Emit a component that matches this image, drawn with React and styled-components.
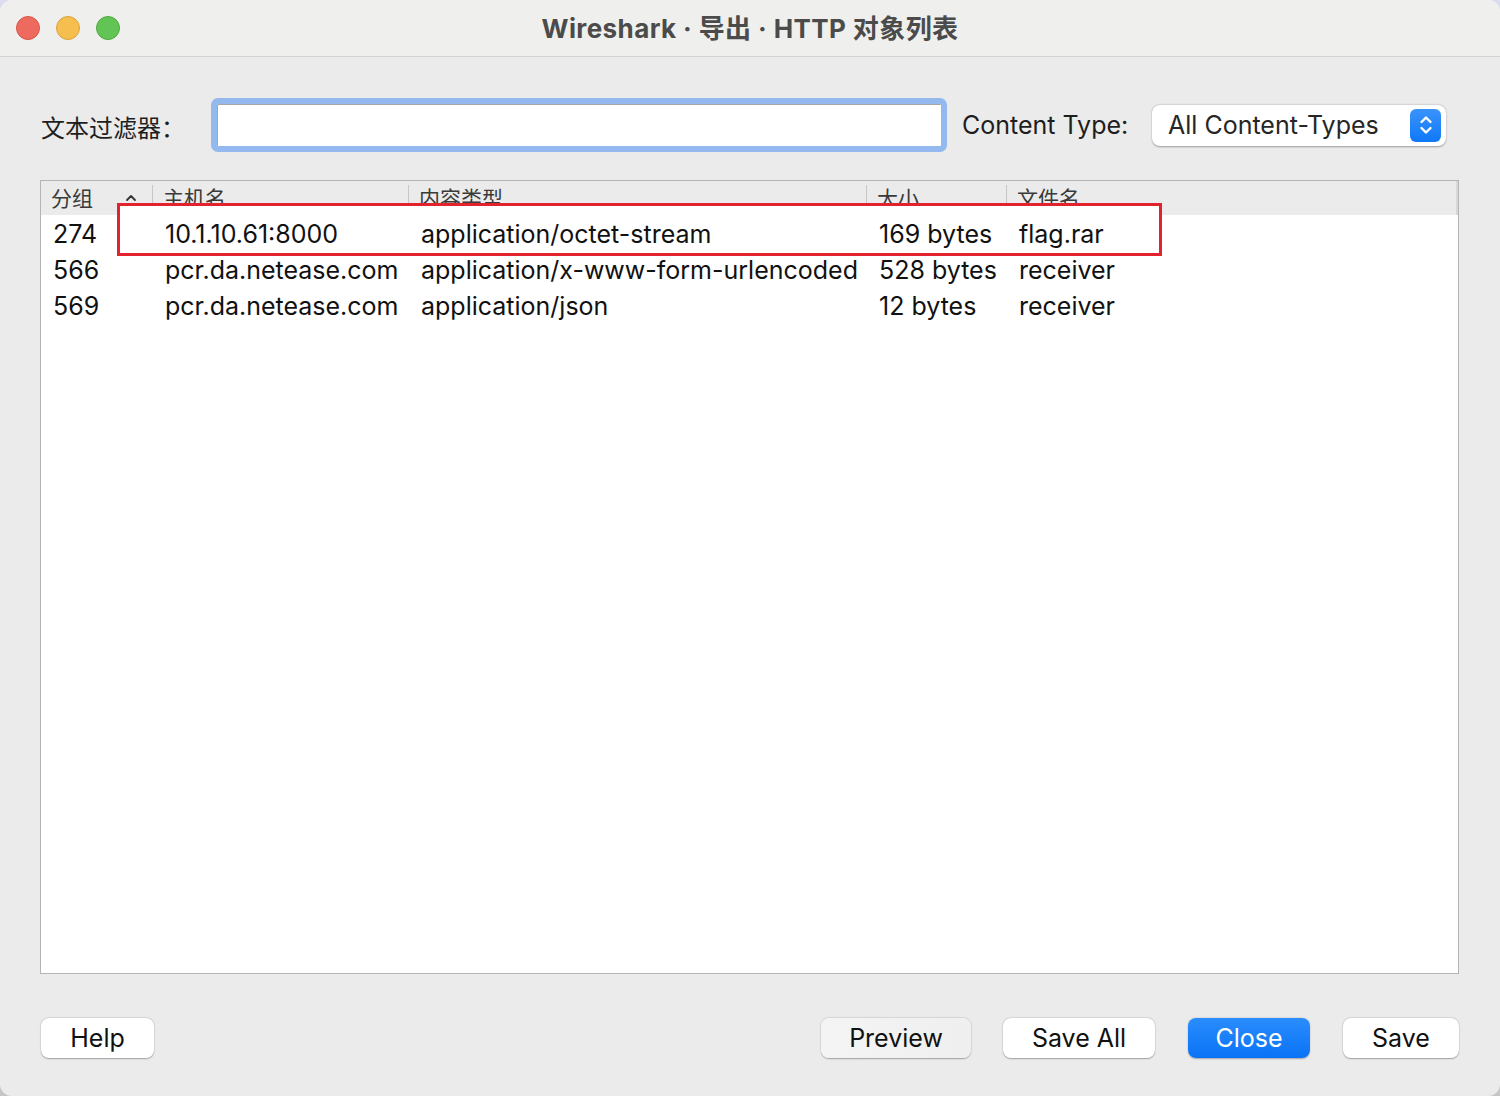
import React from "react";
import styled, { createGlobalStyle } from "styled-components";

const Global = createGlobalStyle`
  html, body { margin: 0; padding: 0; }
  body {
    width: 1500px;
    height: 1096px;
    overflow: hidden;
    background: linear-gradient(180deg, #dcdcf0 0%, #d8d8e4 40%, #c6c6c6 100%);
    font-family: Inter, "Noto Sans CJK SC", "Liberation Sans", sans-serif;
  }
`;

const Window = styled.div`
  width: 1500px;
  height: 1096px;
  border-radius: 12px;
  overflow: hidden;
  background: #ebebeb;
  display: flex;
  flex-direction: column;
  position: relative;
`;

const TitleBar = styled.div`
  height: 56px;
  flex: none;
  background: #efefed;
  border-bottom: 1px solid #d3d3d3;
  display: flex;
  align-items: center;
  position: relative;
`;

const Lights = styled.div`
  position: absolute;
  left: 16px;
  top: 16px;
  display: flex;
  gap: 16px;
`;

const Light = styled.span`
  width: 24px;
  height: 24px;
  border-radius: 50%;
  box-sizing: border-box;
  background: ${(p) => p.$bg};
  border: 1px solid ${(p) => p.$bd};
`;

const Title = styled.div`
  flex: 1;
  text-align: center;
  font-family: Inter, "Noto Sans CJK SC", sans-serif;
  font-weight: 700;
  font-size: 26px;
  letter-spacing: 0.4px;
  color: #4b4b4b;
  margin-top: -3px;
  white-space: pre;
`;

const Content = styled.div`
  flex: 1;
  display: flex;
  flex-direction: column;
  padding: 41px 41px 38px 40px;
  min-height: 0;
`;

const FilterRow = styled.div`
  display: flex;
  align-items: center;
  height: 54px;
  padding-right: 13px;
  flex: none;
`;

const FilterLabel = styled.div`
  width: 170px;
  flex: none;
  font-size: 24px;
  color: #1e1e1e;
  font-family: "Noto Sans CJK SC", sans-serif;
  padding-top: 2px;
  padding-left: 1px;
`;

const FilterInput = styled.div`
  flex: 1;
  height: 54px;
  box-sizing: border-box;
  border: 6px solid #93b9ee;
  border-radius: 7px;
  background: #fff;
  box-shadow: inset 1px 1px 0 #a6a6a6;
`;

const CTLabel = styled.div`
  width: 166px;
  flex: none;
  margin-left: 15px;
  margin-right: 24px;
  font-size: 25px;
  color: #1e1e1e;
  white-space: nowrap;
`;

const Select = styled.div`
  width: 294px;
  height: 41px;
  box-sizing: border-box;
  flex: none;
  background: #fff;
  border-radius: 8px;
  box-shadow: 0 0.5px 2px rgba(0, 0, 0, 0.35);
  display: flex;
  align-items: center;
  padding: 0 5px 0 16px;
  font-size: 25px;
  color: #262626;
`;

const SelectText = styled.span`
  flex: 1;
`;

const Stepper = styled.span`
  width: 31px;
  height: 33px;
  border-radius: 6px;
  background: linear-gradient(180deg, #3a93fd 0%, #0f78f7 100%);
  display: flex;
  align-items: center;
  justify-content: center;
`;

const Table = styled.div`
  margin-top: 28px;
  flex: 1;
  background: #fff;
  border: 1px solid #b4b4b4;
  position: relative;
  display: flex;
  flex-direction: column;
  overflow: hidden;
`;

const Cols = "112px 256px 458px 140px 1fr";

const HeaderRow = styled.div`
  display: grid;
  grid-template-columns: ${Cols};
  height: 34px;
  background: #ebebeb;
  border-right: 2px solid #d8d8d8;
  overflow: hidden;
`;

const HeaderCell = styled.div`
  position: relative;
  padding-left: 10px;
  font-family: "Noto Sans CJK SC", sans-serif;
  font-size: 21px;
  line-height: 34px;
  color: #3a3a3a;
  display: flex;
  align-items: center;
  justify-content: space-between;
  padding-right: 14px;
  &::after {
    content: "";
    display: ${(p) => (p.$last ? "none" : "block")};
    position: absolute;
    right: 0;
    top: 4px;
    height: 25px;
    width: 1px;
    background: #c6c6c6;
  }
`;

const HeaderText = styled.span`
  position: relative;
  top: -1px;
`;

const Row = styled.div`
  display: grid;
  grid-template-columns: ${Cols};
  height: 36px;
  align-items: center;
`;

const Cell = styled.div`
  padding-left: 12px;
  font-size: 25px;
  color: #111;
  white-space: nowrap;
  position: relative;
  top: 1px;
`;

const Highlight = styled.div`
  position: absolute;
  left: 76px;
  top: 22px;
  width: 1045px;
  height: 53px;
  box-sizing: border-box;
  border: 3px solid #e2222c;
  box-shadow: inset 0 9px 0 #fff;
  pointer-events: none;
`;

const Buttons = styled.div`
  margin-top: 44px;
  display: flex;
  align-items: center;
  height: 40px;
  flex: none;
  padding-left: 1px;
`;

const Spacer = styled.div`
  flex: 1;
`;

const Button = styled.div`
  width: ${(p) => p.$w}px;
  height: 40px;
  box-sizing: border-box;
  margin-left: ${(p) => p.$ml || 0}px;
  border-radius: 8px;
  display: flex;
  align-items: center;
  justify-content: center;
  font-size: 25px;
  color: ${(p) => (p.$primary ? "#fff" : "#111")};
  background: ${(p) =>
    p.$primary
      ? "linear-gradient(180deg, #2a8dfd 0%, #0a73f6 100%)"
      : p.$muted
      ? "linear-gradient(90deg, #f4f4f4 0%, #efefef 100%)"
      : "#fff"};
  box-shadow: ${(p) =>
    p.$primary
      ? "0 0.5px 1.5px rgba(0,0,0,0.3)"
      : "0 0.5px 1.5px rgba(0,0,0,0.3), 0 0 0 0.5px rgba(0,0,0,0.06)"};
`;

const rows = [
  ["274", "10.1.10.61:8000", "application/octet-stream", "169 bytes", "flag.rar"],
  ["566", "pcr.da.netease.com", "application/x-www-form-urlencoded", "528 bytes", "receiver"],
  ["569", "pcr.da.netease.com", "application/json", "12 bytes", "receiver"],
];

export default function App() {
  return (
    <>
      <Global />
      <Window>
        <TitleBar>
          <Lights>
            <Light $bg="#ee6a5f" $bd="#d8564b" />
            <Light $bg="#f5be4f" $bd="#dba33c" />
            <Light $bg="#61c454" $bd="#50a944" />
          </Lights>
          <Title>Wireshark · 导出 · HTTP 对象列表</Title>
        </TitleBar>
        <Content>
          <FilterRow>
            <FilterLabel>文本过滤器：</FilterLabel>
            <FilterInput />
            <CTLabel>Content Type:</CTLabel>
            <Select>
              <SelectText>All Content-Types</SelectText>
              <Stepper>
                <svg width="16" height="24" viewBox="0 0 16 24" fill="none" stroke="#fff" strokeWidth="2.4" strokeLinecap="round" strokeLinejoin="round">
                  <path d="M3.5 9 L8 4.5 L12.5 9" />
                  <path d="M3.5 15 L8 19.5 L12.5 15" />
                </svg>
              </Stepper>
            </Select>
          </FilterRow>
          <Table>
            <HeaderRow>
              <HeaderCell>
                <HeaderText>分组</HeaderText>
                <svg width="12" height="8" viewBox="0 0 12 8" fill="none" stroke="#333" strokeWidth="1.8" strokeLinecap="round" strokeLinejoin="round" style={{ marginRight: 2 }}>
                  <path d="M2 6 L6 2 L10 6" />
                </svg>
              </HeaderCell>
              <HeaderCell><HeaderText>主机名</HeaderText></HeaderCell>
              <HeaderCell><HeaderText>内容类型</HeaderText></HeaderCell>
              <HeaderCell><HeaderText>大小</HeaderText></HeaderCell>
              <HeaderCell $last><HeaderText>文件名</HeaderText></HeaderCell>
            </HeaderRow>
            {rows.map((r) => (
              <Row key={r[0]}>
                {r.map((c, i) => (
                  <Cell key={i}>{c}</Cell>
                ))}
              </Row>
            ))}
            <Highlight />
          </Table>
          <Buttons>
            <Button $w={113}>Help</Button>
            <Spacer />
            <Button $w={150} $muted>Preview</Button>
            <Button $w={152} $ml={32}>Save All</Button>
            <Button $w={122} $ml={33} $primary>Close</Button>
            <Button $w={116} $ml={33}>Save</Button>
          </Buttons>
        </Content>
      </Window>
    </>
  );
}
